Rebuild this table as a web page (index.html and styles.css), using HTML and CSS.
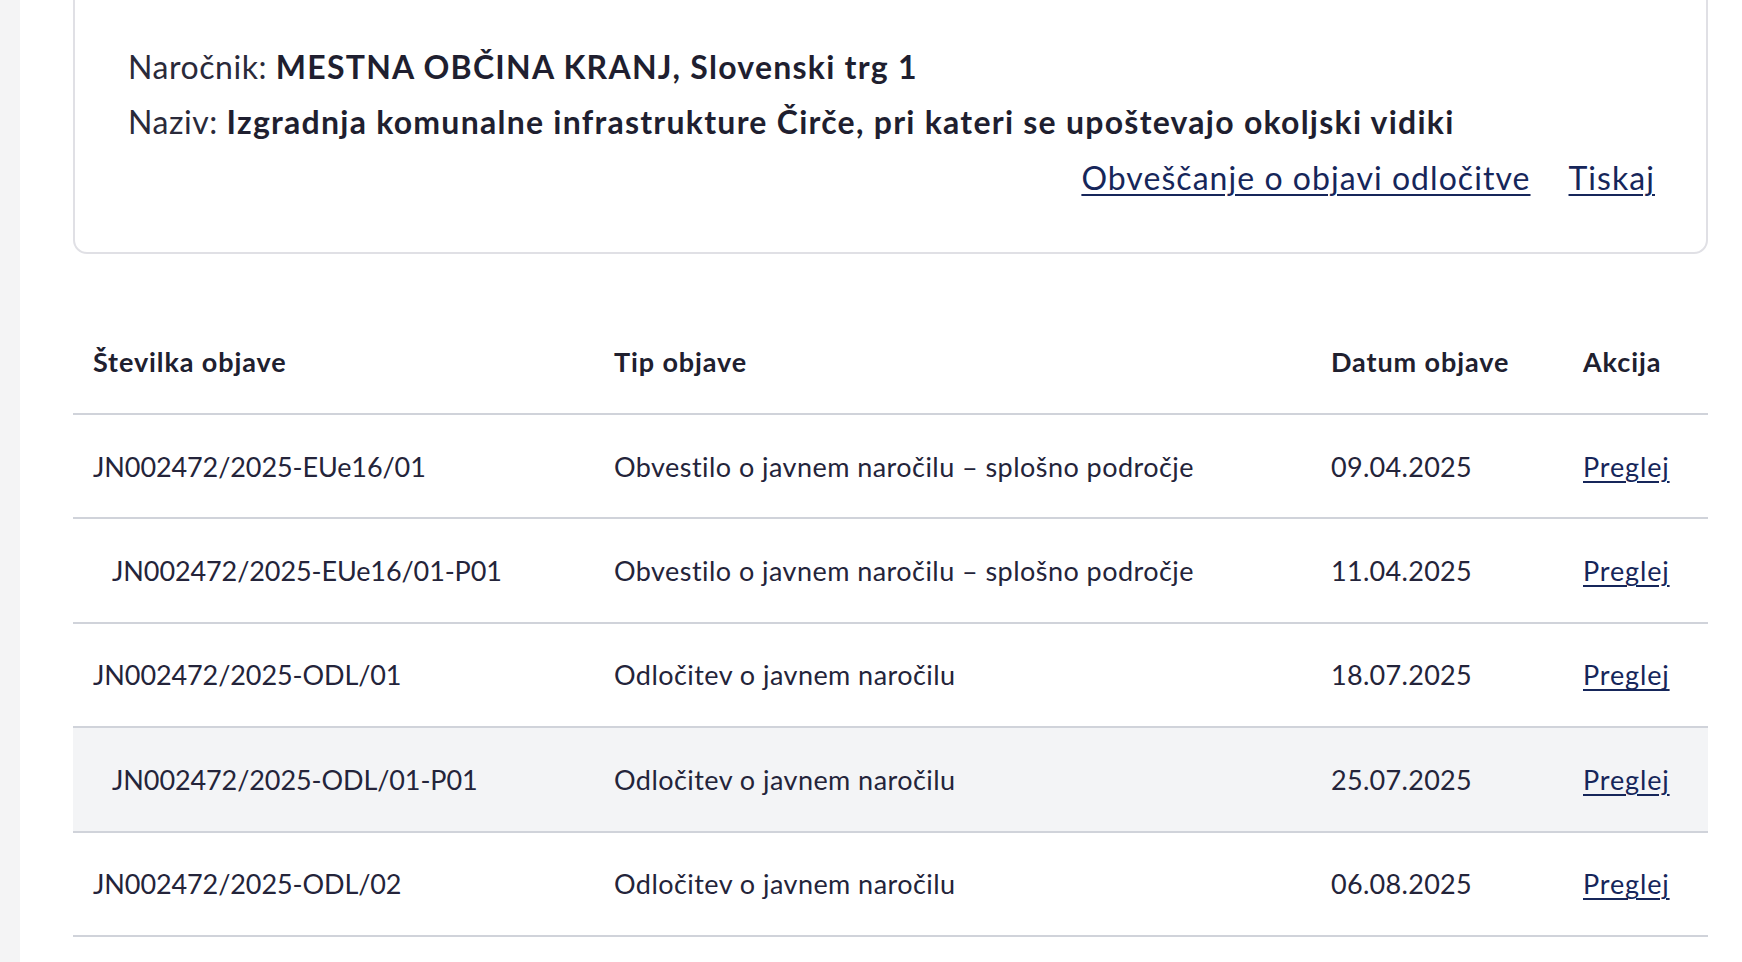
FILE: index.html
```html
<!DOCTYPE html>
<html lang="sl">
<head>
<meta charset="utf-8">
<title>Objave</title>
<link rel="stylesheet" href="styles.css">
</head>
<body>
<div class="page">
  <aside class="rail"></aside>
  <main class="content">
    <section class="card">
      <p class="info">Naročnik: <strong>MESTNA OBČINA KRANJ, Slovenski trg 1</strong></p>
      <p class="info">Naziv: <strong>Izgradnja komunalne infrastrukture Čirče, pri kateri se upoštevajo okoljski vidiki</strong></p>
      <div class="links">
        <a href="#">Obveščanje o objavi odločitve</a>
        <a href="#">Tiskaj</a>
      </div>
    </section>

    <table class="objave">
      <colgroup>
        <col class="c1"><col class="c2"><col class="c3"><col class="c4">
      </colgroup>
      <thead>
        <tr>
          <th>Številka objave</th>
          <th>Tip objave</th>
          <th>Datum objave</th>
          <th>Akcija</th>
        </tr>
      </thead>
      <tbody>
        <tr>
          <td class="num">JN002472/2025-EUe16/01</td>
          <td class="type">Obvestilo o javnem naročilu – splošno področje</td>
          <td>09.04.2025</td>
          <td><a href="#">Preglej</a></td>
        </tr>
        <tr>
          <td class="num sub">JN002472/2025-EUe16/01-P01</td>
          <td class="type">Obvestilo o javnem naročilu – splošno področje</td>
          <td>11.04.2025</td>
          <td><a href="#">Preglej</a></td>
        </tr>
        <tr>
          <td class="num">JN002472/2025-ODL/01</td>
          <td class="type">Odločitev o javnem naročilu</td>
          <td>18.07.2025</td>
          <td><a href="#">Preglej</a></td>
        </tr>
        <tr class="hl">
          <td class="num sub">JN002472/2025-ODL/01-P01</td>
          <td class="type">Odločitev o javnem naročilu</td>
          <td>25.07.2025</td>
          <td><a href="#">Preglej</a></td>
        </tr>
        <tr>
          <td class="num">JN002472/2025-ODL/02</td>
          <td class="type">Odločitev o javnem naročilu</td>
          <td>06.08.2025</td>
          <td><a href="#">Preglej</a></td>
        </tr>
      </tbody>
    </table>
  </main>
</div>
</body>
</html>
```
FILE: styles.css
```css
html, body {
  margin: 0;
  padding: 0;
  background: #ffffff;
}
body {
  font-family: "Lato", "Liberation Sans", sans-serif;
  color: #24243a;
  overflow: hidden;
}
.page {
  display: flex;
  min-height: 962px;
}
.rail {
  width: 20px;
  flex: 0 0 20px;
  background: #f4f4f5;
}
.content {
  flex: 1;
  padding: 0 34px 0 53px;
}
.card {
  margin-top: -20px;
  border: 2px solid #e0e0e5;
  border-radius: 14px;
  padding: 57px 51px 45px 53px;
}
.info {
  margin: 0;
  font-size: 32px;
  line-height: 55px;
  letter-spacing: 0.55px;
  color: #2a2a3a;
}
.info strong {
  font-weight: 700;
  letter-spacing: 1.25px;
  color: #1f1f30;
}
.links {
  display: flex;
  justify-content: flex-end;
  gap: 38px;
  font-size: 32px;
  line-height: 58px;
  letter-spacing: 1.05px;
}
.links a, .objave a {
  color: #16265a;
  text-decoration: underline;
  text-decoration-thickness: 2px;
  text-underline-offset: 4px;
}
.objave {
  width: 100%;
  margin-top: 60px;
  border-collapse: collapse;
  table-layout: fixed;
  font-size: 27px;
}
.c1 { width: 521px; }
.c2 { width: 717px; }
.c3 { width: 252px; }
.c4 { width: 145px; }
.objave th {
  text-align: left;
  font-weight: 700;
  letter-spacing: 0.9px;
  color: #20202f;
  height: 95px;
  padding: 0 0 4px 20px;
  border-bottom: 2px solid #d0d3da;
}
.objave td {
  height: 102.4px;
  padding: 0 0 0 20px;
  border-bottom: 2px solid #d0d3da;
  color: #24243a;
  letter-spacing: 0.3px;
  white-space: nowrap;
}
.objave td.num {
  letter-spacing: -0.1px;
}
.objave td.type {
  letter-spacing: 0.45px;
}
.objave td a {
  letter-spacing: 0.85px;
}
.objave td.sub {
  padding-left: 39px;
}
.objave tr.hl td {
  background: #f3f4f6;
}
```
